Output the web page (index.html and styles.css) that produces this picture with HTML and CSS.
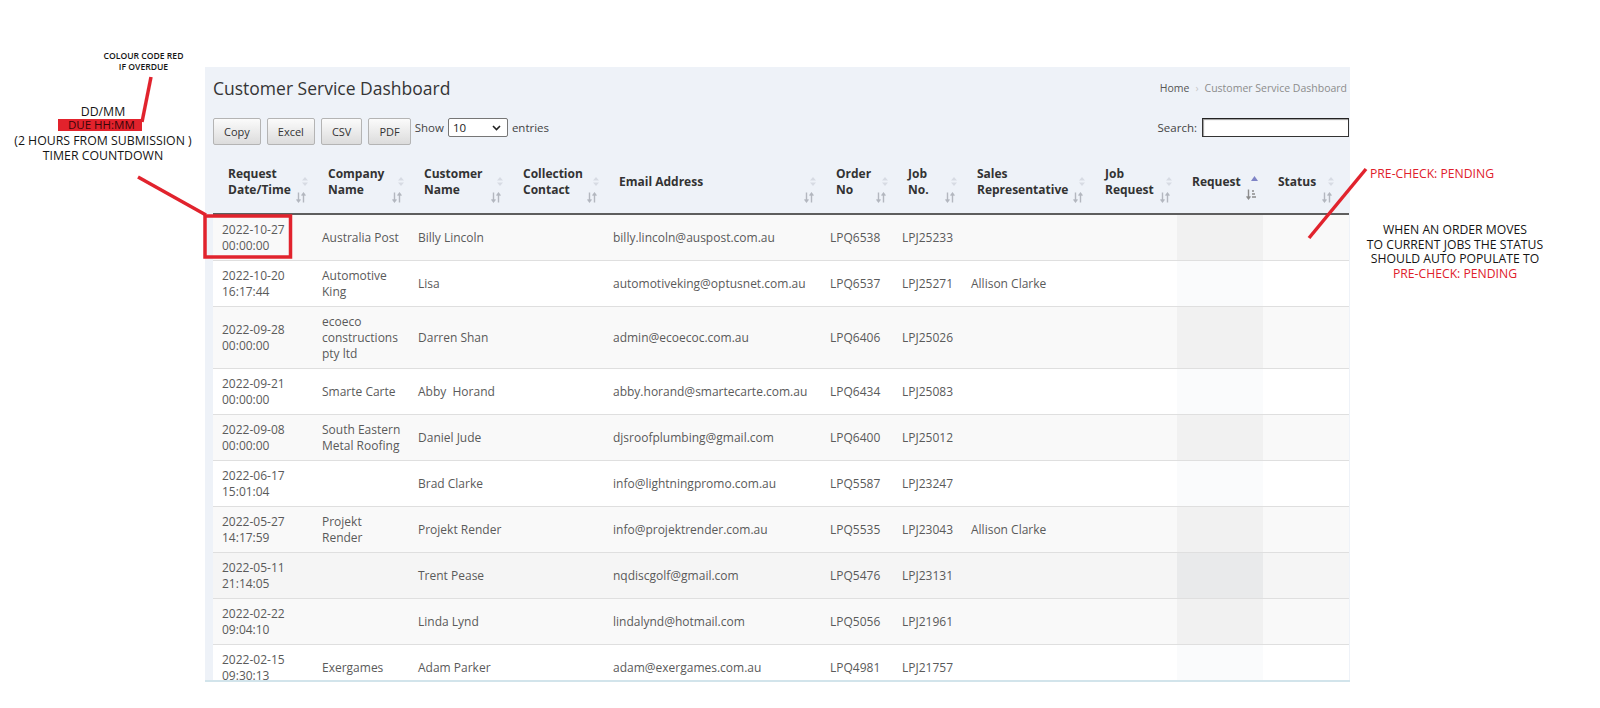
FILE: index.html
```html
<!DOCTYPE html>
<html lang="en">
<head>
<meta charset="utf-8">
<title>Customer Service Dashboard</title>
<link rel="stylesheet" href="styles.css">
</head>
<body>
<div class="page">

  <div class="note note-top">COLOUR CODE RED<br>IF OVERDUE</div>
  <div class="note note-left">
    <div class="l1">DD/MM</div>
    <div class="due">DUE HH:MM</div>
    <div class="l3">(2 HOURS FROM SUBMISSION )</div>
    <div class="l4">TIMER COUNTDOWN</div>
  </div>
  <div class="note note-status">PRE-CHECK: PENDING</div>
  <div class="note note-right">
    WHEN AN ORDER MOVES<br>
    TO CURRENT JOBS THE STATUS<br>
    SHOULD AUTO POPULATE TO<br>
    <span class="red">PRE-CHECK: PENDING</span>
  </div>

  <section class="panel">
    <div class="title-row">
      <h1>Customer Service Dashboard</h1>
      <nav class="crumb"><span class="home">Home</span><span class="sep">›</span>Customer Service Dashboard</nav>
    </div>

    <div class="controls">
      <button class="btn">Copy</button>
      <button class="btn">Excel</button>
      <button class="btn">CSV</button>
      <button class="btn">PDF</button>
      <div class="length">Show
        <span class="select">10
          <svg width="9" height="6" viewBox="0 0 9 6"><path d="M1 1l3.5 3.5L8 1" stroke="#222" stroke-width="1.6" fill="none"/></svg>
        </span>
        entries</div>
      <label class="search">Search: <input type="text" class="search-input"></label>
    </div>

    <table class="grid">
      <colgroup>
        <col class="c-date"><col class="c-company"><col class="c-customer"><col class="c-contact">
        <col class="c-email"><col class="c-order"><col class="c-job"><col class="c-sales">
        <col class="c-jobreq"><col class="c-req"><col class="c-status">
      </colgroup>
      <thead>
        <tr>
          <th>Request Date/Time<svg class="s-a" width="6" height="9" viewBox="0 0 6 9"><path d="M3 0L6 3.6H0zM3 9L0 5.4H6z"/></svg><svg class="s-b" width="10" height="11" viewBox="0 0 10 11"><path d="M2.5 0.5v9M0.6 7.4l1.9 2.4 1.9-2.4M7.5 10.5v-9M5.6 3.6l1.9-2.4 1.9 2.4"/></svg></th>
          <th>Company Name<svg class="s-a" width="6" height="9" viewBox="0 0 6 9"><path d="M3 0L6 3.6H0zM3 9L0 5.4H6z"/></svg><svg class="s-b" width="10" height="11" viewBox="0 0 10 11"><path d="M2.5 0.5v9M0.6 7.4l1.9 2.4 1.9-2.4M7.5 10.5v-9M5.6 3.6l1.9-2.4 1.9 2.4"/></svg></th>
          <th>Customer Name<svg class="s-a" width="6" height="9" viewBox="0 0 6 9"><path d="M3 0L6 3.6H0zM3 9L0 5.4H6z"/></svg><svg class="s-b" width="10" height="11" viewBox="0 0 10 11"><path d="M2.5 0.5v9M0.6 7.4l1.9 2.4 1.9-2.4M7.5 10.5v-9M5.6 3.6l1.9-2.4 1.9 2.4"/></svg></th>
          <th>Collection Contact<svg class="s-a" width="6" height="9" viewBox="0 0 6 9"><path d="M3 0L6 3.6H0zM3 9L0 5.4H6z"/></svg><svg class="s-b" width="10" height="11" viewBox="0 0 10 11"><path d="M2.5 0.5v9M0.6 7.4l1.9 2.4 1.9-2.4M7.5 10.5v-9M5.6 3.6l1.9-2.4 1.9 2.4"/></svg></th>
          <th>Email Address<svg class="s-a" width="6" height="9" viewBox="0 0 6 9"><path d="M3 0L6 3.6H0zM3 9L0 5.4H6z"/></svg><svg class="s-b" width="10" height="11" viewBox="0 0 10 11"><path d="M2.5 0.5v9M0.6 7.4l1.9 2.4 1.9-2.4M7.5 10.5v-9M5.6 3.6l1.9-2.4 1.9 2.4"/></svg></th>
          <th>Order No<svg class="s-a" width="6" height="9" viewBox="0 0 6 9"><path d="M3 0L6 3.6H0zM3 9L0 5.4H6z"/></svg><svg class="s-b" width="10" height="11" viewBox="0 0 10 11"><path d="M2.5 0.5v9M0.6 7.4l1.9 2.4 1.9-2.4M7.5 10.5v-9M5.6 3.6l1.9-2.4 1.9 2.4"/></svg></th>
          <th>Job No.<svg class="s-a" width="6" height="9" viewBox="0 0 6 9"><path d="M3 0L6 3.6H0zM3 9L0 5.4H6z"/></svg><svg class="s-b" width="10" height="11" viewBox="0 0 10 11"><path d="M2.5 0.5v9M0.6 7.4l1.9 2.4 1.9-2.4M7.5 10.5v-9M5.6 3.6l1.9-2.4 1.9 2.4"/></svg></th>
          <th>Sales Representative<svg class="s-a" width="6" height="9" viewBox="0 0 6 9"><path d="M3 0L6 3.6H0zM3 9L0 5.4H6z"/></svg><svg class="s-b" width="10" height="11" viewBox="0 0 10 11"><path d="M2.5 0.5v9M0.6 7.4l1.9 2.4 1.9-2.4M7.5 10.5v-9M5.6 3.6l1.9-2.4 1.9 2.4"/></svg></th>
          <th>Job Request<svg class="s-a" width="6" height="9" viewBox="0 0 6 9"><path d="M3 0L6 3.6H0zM3 9L0 5.4H6z"/></svg><svg class="s-b" width="10" height="11" viewBox="0 0 10 11"><path d="M2.5 0.5v9M0.6 7.4l1.9 2.4 1.9-2.4M7.5 10.5v-9M5.6 3.6l1.9-2.4 1.9 2.4"/></svg></th>
          <th>Request<svg class="s-up" width="7" height="5" viewBox="0 0 7 5"><path d="M3.5 0L7 5H0z"/></svg><svg class="s-amt" width="11" height="11" viewBox="0 0 11 11"><path class="arr" d="M2.5 0.5v9M0.6 7.4l1.9 2.4 1.9-2.4"/><path class="bars" d="M6 2h2M6 5h3M6 8h4"/></svg></th>
          <th class="last">Status<svg class="s-a" width="6" height="9" viewBox="0 0 6 9"><path d="M3 0L6 3.6H0zM3 9L0 5.4H6z"/></svg><svg class="s-b" width="10" height="11" viewBox="0 0 10 11"><path d="M2.5 0.5v9M0.6 7.4l1.9 2.4 1.9-2.4M7.5 10.5v-9M5.6 3.6l1.9-2.4 1.9 2.4"/></svg></th>
        </tr>
      </thead>
      <tbody>
        <tr><td>2022-10-27 00:00:00</td><td>Australia Post</td><td>Billy Lincoln</td><td></td><td>billy.lincoln@auspost.com.au</td><td>LPQ6538</td><td>LPJ25233</td><td></td><td></td><td class="srt"></td><td></td></tr>
        <tr><td>2022-10-20 16:17:44</td><td>Automotive King</td><td>Lisa</td><td></td><td>automotiveking@optusnet.com.au</td><td>LPQ6537</td><td>LPJ25271</td><td>Allison Clarke</td><td></td><td class="srt"></td><td></td></tr>
        <tr><td>2022-09-28 00:00:00</td><td>ecoeco constructions pty ltd</td><td>Darren Shan</td><td></td><td>admin@ecoecoc.com.au</td><td>LPQ6406</td><td>LPJ25026</td><td></td><td></td><td class="srt"></td><td></td></tr>
        <tr><td>2022-09-21 00:00:00</td><td>Smarte Carte</td><td>Abby&nbsp; Horand</td><td></td><td>abby.horand@smartecarte.com.au</td><td>LPQ6434</td><td>LPJ25083</td><td></td><td></td><td class="srt"></td><td></td></tr>
        <tr><td>2022-09-08 00:00:00</td><td>South Eastern Metal Roofing</td><td>Daniel Jude</td><td></td><td>djsroofplumbing@gmail.com</td><td>LPQ6400</td><td>LPJ25012</td><td></td><td></td><td class="srt"></td><td></td></tr>
        <tr><td>2022-06-17 15:01:04</td><td></td><td>Brad Clarke</td><td></td><td>info@lightningpromo.com.au</td><td>LPQ5587</td><td>LPJ23247</td><td></td><td></td><td class="srt"></td><td></td></tr>
        <tr><td>2022-05-27 14:17:59</td><td>Projekt Render</td><td>Projekt Render</td><td></td><td>info@projektrender.com.au</td><td>LPQ5535</td><td>LPJ23043</td><td>Allison Clarke</td><td></td><td class="srt"></td><td></td></tr>
        <tr class="hover"><td>2022-05-11 21:14:05</td><td></td><td>Trent Pease</td><td></td><td>nqdiscgolf@gmail.com</td><td>LPQ5476</td><td>LPJ23131</td><td></td><td></td><td class="srt"></td><td></td></tr>
        <tr><td>2022-02-22 09:04:10</td><td></td><td>Linda Lynd</td><td></td><td>lindalynd@hotmail.com</td><td>LPQ5056</td><td>LPJ21961</td><td></td><td></td><td class="srt"></td><td></td></tr>
        <tr><td>2022-02-15 09:30:13</td><td>Exergames</td><td>Adam Parker</td><td></td><td>adam@exergames.com.au</td><td>LPQ4981</td><td>LPJ21757</td><td></td><td></td><td class="srt"></td><td></td></tr>
      </tbody>
    </table>
  </section>

  <svg class="marks" width="1600" height="708" viewBox="0 0 1600 708">
    <line x1="151" y1="77" x2="142" y2="122"/>
    <line x1="138" y1="177" x2="206" y2="215"/>
    <rect x="205" y="216" width="85.5" height="41"/>
    <line x1="1366" y1="169" x2="1309" y2="238"/>
  </svg>
</div>
</body>
</html>
```

FILE: styles.css
```css
html, body {
  margin: 0;
  background: #ffffff;
}

body {
  font-family: "Open Sans", "Liberation Sans", sans-serif;
  color: #333;
}

.page {
  position: relative;
  width: 1600px;
  height: 708px;
  overflow: hidden;
  padding-top: 67px;
  box-sizing: border-box;
}

/* ---------- annotations ---------- */
.note {
  position: absolute;
  font-weight: 500;
  color: #141414;
  text-align: center;
  white-space: nowrap;
}

.note-top {
  left: 96px;
  top: 51px;
  width: 95px;
  font-size: 8.6px;
  line-height: 11px;
  font-weight: 600;
}

.note-left {
  left: 3px;
  top: 105px;
  width: 200px;
  font-size: 12.3px;
}

.note-left .l1 {
  line-height: 14px;
}

.note-left .due {
  width: fit-content;
  margin-left: 55px;
  padding: 0 7px 0 10px;
  height: 12px;
  line-height: 12px;
  font-size: 11.5px;
  background: #e2222c;
  color: #3a0508;
}

.note-left .l3 {
  margin-top: 2px;
  line-height: 15px;
}

.note-left .l4 {
  line-height: 15px;
}

.note-status {
  left: 1370px;
  top: 166px;
  font-size: 12.2px;
  line-height: 16px;
  color: #e0202b;
}

.note-right {
  left: 1345px;
  top: 223px;
  width: 220px;
  font-size: 12.2px;
  line-height: 14.7px;
}

.note-right .red {
  color: #e0202b;
}

.marks {
  position: absolute;
  left: 0;
  top: 0;
  pointer-events: none;
}

.marks line,
.marks rect {
  stroke: #e1232d;
  stroke-width: 3.5;
  fill: none;
}

/* ---------- panel ---------- */
.panel {
  margin-left: 205px;
  width: 1145px;
  height: 615px;
  box-sizing: border-box;
  background: #eef2f8;
  padding: 0 1px 0 8px;
  border-bottom: 2px solid #d2e4eb;
  overflow: hidden;
}

.title-row {
  display: flex;
  align-items: center;
  justify-content: space-between;
  height: 42px;
}

.title-row h1 {
  margin: 0;
  font-size: 17.5px;
  font-weight: 400;
  color: #353535;
}

.crumb {
  font-size: 10.5px;
  color: #8c8c8c;
  margin-right: 2px;
}

.crumb .home {
  color: #555;
}

.crumb .sep {
  color: #c8c8c8;
  margin: 0 6px;
}

.controls {
  display: flex;
  align-items: flex-start;
  margin-top: 9px;
  height: 27px;
}

.btn {
  height: 27px;
  padding: 0 10px;
  margin: 0 6px 0 0;
  font-family: "Open Sans", "Liberation Sans", sans-serif;
  font-size: 11px;
  color: #333;
  border: 1px solid #b4b4b4;
  border-radius: 2px;
  background: linear-gradient(#fbfbfb, #dcdcdc);
}

.length {
  display: flex;
  align-items: center;
  gap: 4px;
  height: 19px;
  margin-left: -2px;
  font-size: 11.5px;
  color: #444;
}

.select {
  display: flex;
  align-items: center;
  justify-content: space-between;
  width: 60px;
  height: 19px;
  box-sizing: border-box;
  padding: 0 6px 0 4px;
  border: 1px solid #767676;
  border-radius: 2px;
  background: #fff;
  color: #222;
  font-size: 11.5px;
}

.search {
  margin-left: auto;
  display: flex;
  align-items: center;
  gap: 5px;
  height: 19px;
  font-size: 11.5px;
  color: #444;
}

.search-input {
  width: 147px;
  height: 19px;
  box-sizing: border-box;
  margin: 0;
  padding: 0 3px;
  border: 1px solid #333;
  border-top-color: #222;
  background: #fff;
  box-shadow: inset 1px 1px 1px #999;
  border-radius: 0;
}

/* ---------- table ---------- */
.grid {
  margin-top: 5px;
  width: 1136px;
  table-layout: fixed;
  border-collapse: collapse;
}

.c-date { width: 100px; }
.c-company { width: 96px; }
.c-customer { width: 99px; }
.c-contact { width: 96px; }
.c-email { width: 217px; }
.c-order { width: 72px; }
.c-job { width: 69px; }
.c-sales { width: 128px; }
.c-jobreq { width: 87px; }
.c-req { width: 86px; }
.c-status { width: 86px; }

.grid th {
  position: relative;
  text-align: left;
  vertical-align: middle;
  font-size: 12px;
  line-height: 16px;
  font-weight: 700;
  color: #333;
  padding: 16px 18px 15px 15px;
  border-bottom: 2px solid #5e5e5e;
}

.grid th .s-a {
  position: absolute;
  right: 5px;
  top: 27px;
  fill: #d7dbe3;
}

.grid th .s-b {
  position: absolute;
  right: 7px;
  top: 42px;
  fill: none;
  stroke: #b3b7bf;
  stroke-width: 1.4;
}

.grid th.last .s-a {
  right: 15px;
}

.grid th.last .s-b {
  right: 17px;
}

.grid th .s-up {
  position: absolute;
  right: 5px;
  top: 26px;
  fill: #7f84c6;
}

.grid th .s-amt {
  position: absolute;
  right: 6px;
  top: 39px;
  fill: none;
  stroke: #8c8c8c;
  stroke-width: 1.4;
}

.grid td {
  font-size: 12px;
  line-height: 16px;
  color: #5a5a5a;
  padding: 7px 6px 6px 9px;
  border-bottom: 1px solid #dfdfdf;
  vertical-align: middle;
  background: #fff;
}

.grid tbody tr:nth-child(odd) td {
  background: #f9f9f9;
}

.grid tbody tr:nth-child(odd) td.srt {
  background: #f1f1f1;
}

.grid tbody tr:nth-child(even) td.srt {
  background: #fafbfc;
}

.grid tbody tr.hover td {
  background: #f5f5f5;
}

.grid tbody tr.hover td.srt {
  background: #e9eaeb;
}
```
